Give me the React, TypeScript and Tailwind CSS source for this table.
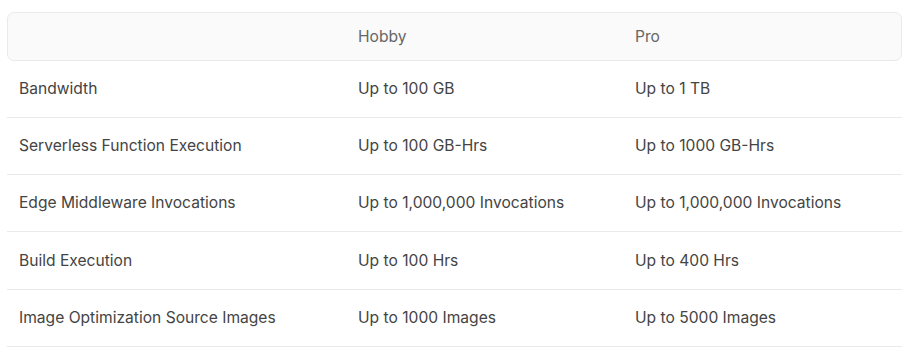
const rows = [
  ["Bandwidth", "Up to 100 GB", "Up to 1 TB"],
  ["Serverless Function Execution", "Up to 100 GB-Hrs", "Up to 1000 GB-Hrs"],
  ["Edge Middleware Invocations", "Up to 1,000,000 Invocations", "Up to 1,000,000 Invocations"],
  ["Build Execution", "Up to 100 Hrs", "Up to 400 Hrs"],
  ["Image Optimization Source Images", "Up to 1000 Images", "Up to 5000 Images"],
]

export default function App() {
  return (
    <div className="bg-white px-[7px] pt-[12px] font-['Inter',sans-serif] text-[15.6px]">
      <div className="grid h-[48.5px] grid-cols-[338px_277px_1fr] items-center rounded-[7px] border border-[#eaeaea] bg-[#fafafa] text-[#666]">
        <div />
        <div className="px-3">Hobby</div>
        <div className="px-3">Pro</div>
      </div>
      {rows.map((row) => (
        <div
          key={row[0]}
          className="grid h-[57.25px] grid-cols-[339px_277px_1fr] items-center border-b border-[#eaeaea] text-[#444]"
        >
          {row.map((cell, i) => (
            <div key={i} className="px-3">
              {cell}
            </div>
          ))}
        </div>
      ))}
    </div>
  )
}
